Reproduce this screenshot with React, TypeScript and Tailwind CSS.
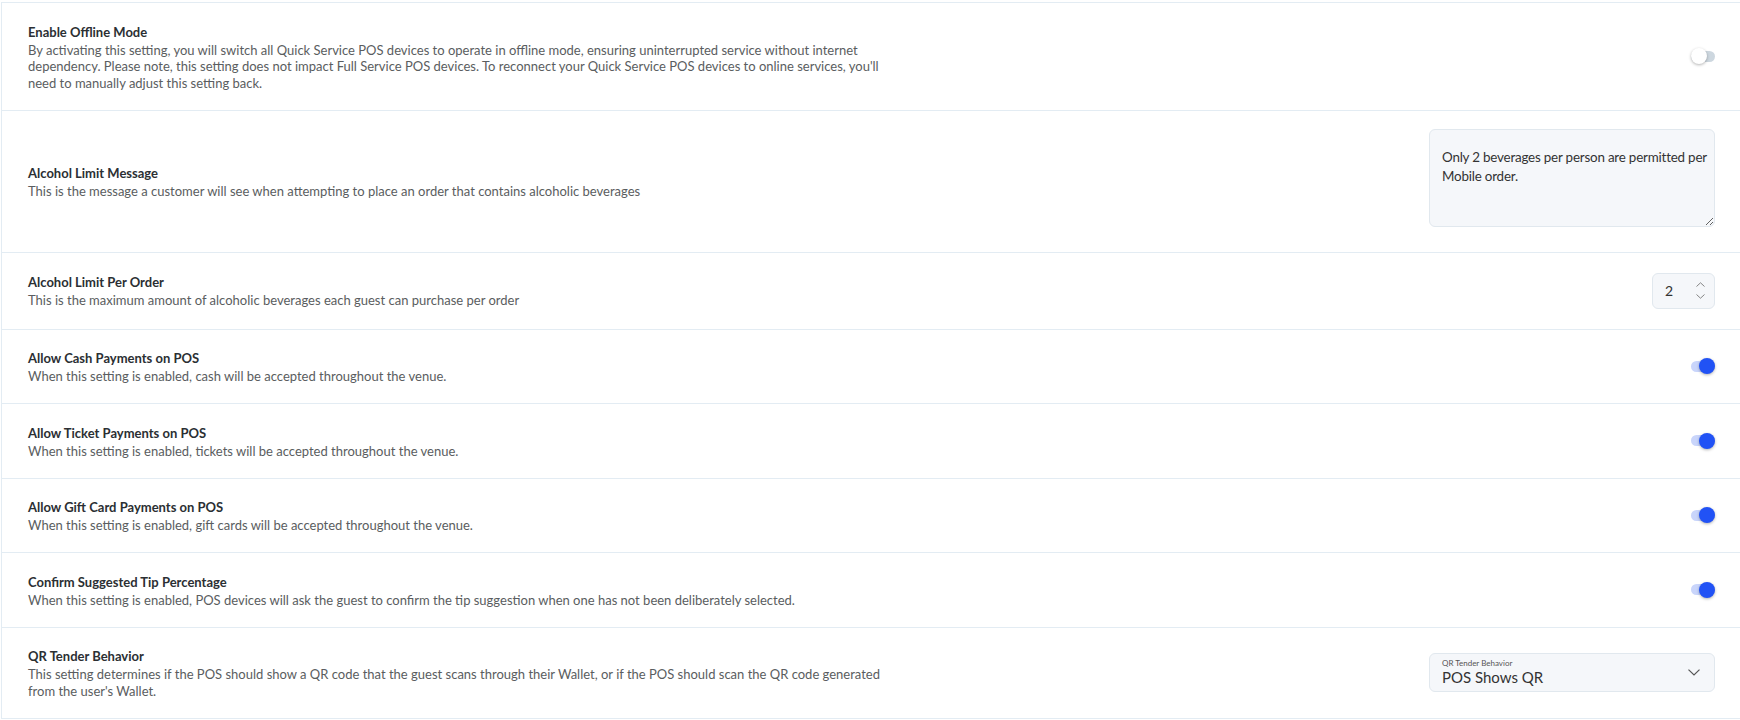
import React, { useState } from 'react';

type Control =
  | { kind: 'toggle'; on: boolean }
  | { kind: 'textarea'; value: string }
  | { kind: 'number'; value: number }
  | { kind: 'select'; label: string; value: string };

interface Setting {
  title: string;
  description: string;
  control: Control;
}

const settings: Setting[] = [
  {
    title: 'Enable Offline Mode',
    description:
      "By activating this setting, you will switch all Quick Service POS devices to operate in offline mode, ensuring uninterrupted service without internet dependency. Please note, this setting does not impact Full Service POS devices. To reconnect your Quick Service POS devices to online services, you'll need to manually adjust this setting back.",
    control: { kind: 'toggle', on: false },
  },
  {
    title: 'Alcohol Limit Message',
    description:
      'This is the message a customer will see when attempting to place an order that contains alcoholic beverages',
    control: { kind: 'textarea', value: 'Only 2 beverages per person are permitted per Mobile order.' },
  },
  {
    title: 'Alcohol Limit Per Order',
    description: 'This is the maximum amount of alcoholic beverages each guest can purchase per order',
    control: { kind: 'number', value: 2 },
  },
  {
    title: 'Allow Cash Payments on POS',
    description: 'When this setting is enabled, cash will be accepted throughout the venue.',
    control: { kind: 'toggle', on: true },
  },
  {
    title: 'Allow Ticket Payments on POS',
    description: 'When this setting is enabled, tickets will be accepted throughout the venue.',
    control: { kind: 'toggle', on: true },
  },
  {
    title: 'Allow Gift Card Payments on POS',
    description: 'When this setting is enabled, gift cards will be accepted throughout the venue.',
    control: { kind: 'toggle', on: true },
  },
  {
    title: 'Confirm Suggested Tip Percentage',
    description:
      'When this setting is enabled, POS devices will ask the guest to confirm the tip suggestion when one has not been deliberately selected.',
    control: { kind: 'toggle', on: true },
  },
  {
    title: 'QR Tender Behavior',
    description:
      "This setting determines if the POS should show a QR code that the guest scans through their Wallet, or if the POS should scan the QR code generated from the user's Wallet.",
    control: { kind: 'select', label: 'QR Tender Behavior', value: 'POS Shows QR' },
  },
];

const Toggle: React.FC<{ initial: boolean }> = ({ initial }) => {
  const [on, setOn] = useState(initial);
  return (
    <button
      type="button"
      onClick={() => setOn(v => !v)}
      className="relative flex h-4 w-[24px] items-center"
    >
      <span className={`block h-[11px] w-[24px] rounded-full ${on ? 'bg-[#c9d5fb]' : 'bg-[#cdd7df]'}`} />
      <span
        className={`absolute top-0 h-4 w-4 rounded-full shadow-[0_1px_3px_rgba(0,0,0,0.3)] ${
          on ? 'right-0 bg-[#2152f5]' : 'left-0 bg-white'
        }`}
      />
    </button>
  );
};

const NumberBox: React.FC<{ value: number }> = ({ value }) => (
  <div className="my-[1.5px] flex h-[36px] w-[63px] items-center justify-between rounded-md border border-[#e1e8ee] bg-[#f5f7fa] pl-[12px] pr-[9px]">
    <span className="text-[14px] text-[#333]">{value}</span>
    <div className="flex flex-col gap-[7px] text-[#777]">
      <svg width="9" height="5" viewBox="0 0 9 5" fill="none" stroke="currentColor" strokeWidth="0.9">
        <path d="M0.5 4.5 4.5 0.8 8.5 4.5" />
      </svg>
      <svg width="9" height="5" viewBox="0 0 9 5" fill="none" stroke="currentColor" strokeWidth="0.9">
        <path d="M0.5 0.5 4.5 4.2 8.5 0.5" />
      </svg>
    </div>
  </div>
);

const SelectBox: React.FC<{ label: string; value: string }> = ({ label, value }) => (
  <div className="flex h-[39px] w-[286px] items-center justify-between rounded-md border border-[#e1e8ee] bg-[#f5f7fa] pl-[12px] pr-[14px]">
    <div className="flex flex-col">
      <span className="text-[8px] leading-[10px] text-[#555]">{label}</span>
      <span className="text-[15px] leading-[19px] text-[#333]">{value}</span>
    </div>
    <svg width="12" height="7" viewBox="0 0 12 7" fill="none" stroke="#555" strokeWidth="1.2">
      <path d="M0.5 0.6 6 6 11.5 0.6" />
    </svg>
  </div>
);

const renderControl = (c: Control) => {
  switch (c.kind) {
    case 'toggle':
      return <Toggle initial={c.on} />;
    case 'textarea':
      return (
        <textarea
          defaultValue={c.value}
          className="mb-[6px] block h-[98px] w-[286px] rounded-md border border-[#e1e8ee] bg-[#f5f7fa] pl-[12px] pr-0 pt-[18px] text-[13.4px] leading-[19px] tracking-[-0.2px] text-[#333] outline-none"
        />
      );
    case 'number':
      return <NumberBox value={c.value} />;
    case 'select':
      return <SelectBox label={c.label} value={c.value} />;
  }
};

export default function App() {
  return (
    <div className="min-h-screen bg-white pt-[2px] pl-[1px] font-['Lato','Noto_Sans',sans-serif]">
      <div className="border-l border-t border-[#e3ecf3]">
        {settings.map(s => (
          <div
            key={s.title}
            className="flex items-center justify-between border-b border-[#e3ecf3] py-[18.5px] pl-[26px] pr-[25px]"
          >
            <div className="max-w-[865px]">
              <h3 className="text-[13px] font-bold leading-5 text-[#2b2f33]">{s.title}</h3>
              <p className="text-[13px] leading-[16.5px] text-[#5a5d60]">{s.description}</p>
            </div>
            {renderControl(s.control)}
          </div>
        ))}
      </div>
    </div>
  );
}
